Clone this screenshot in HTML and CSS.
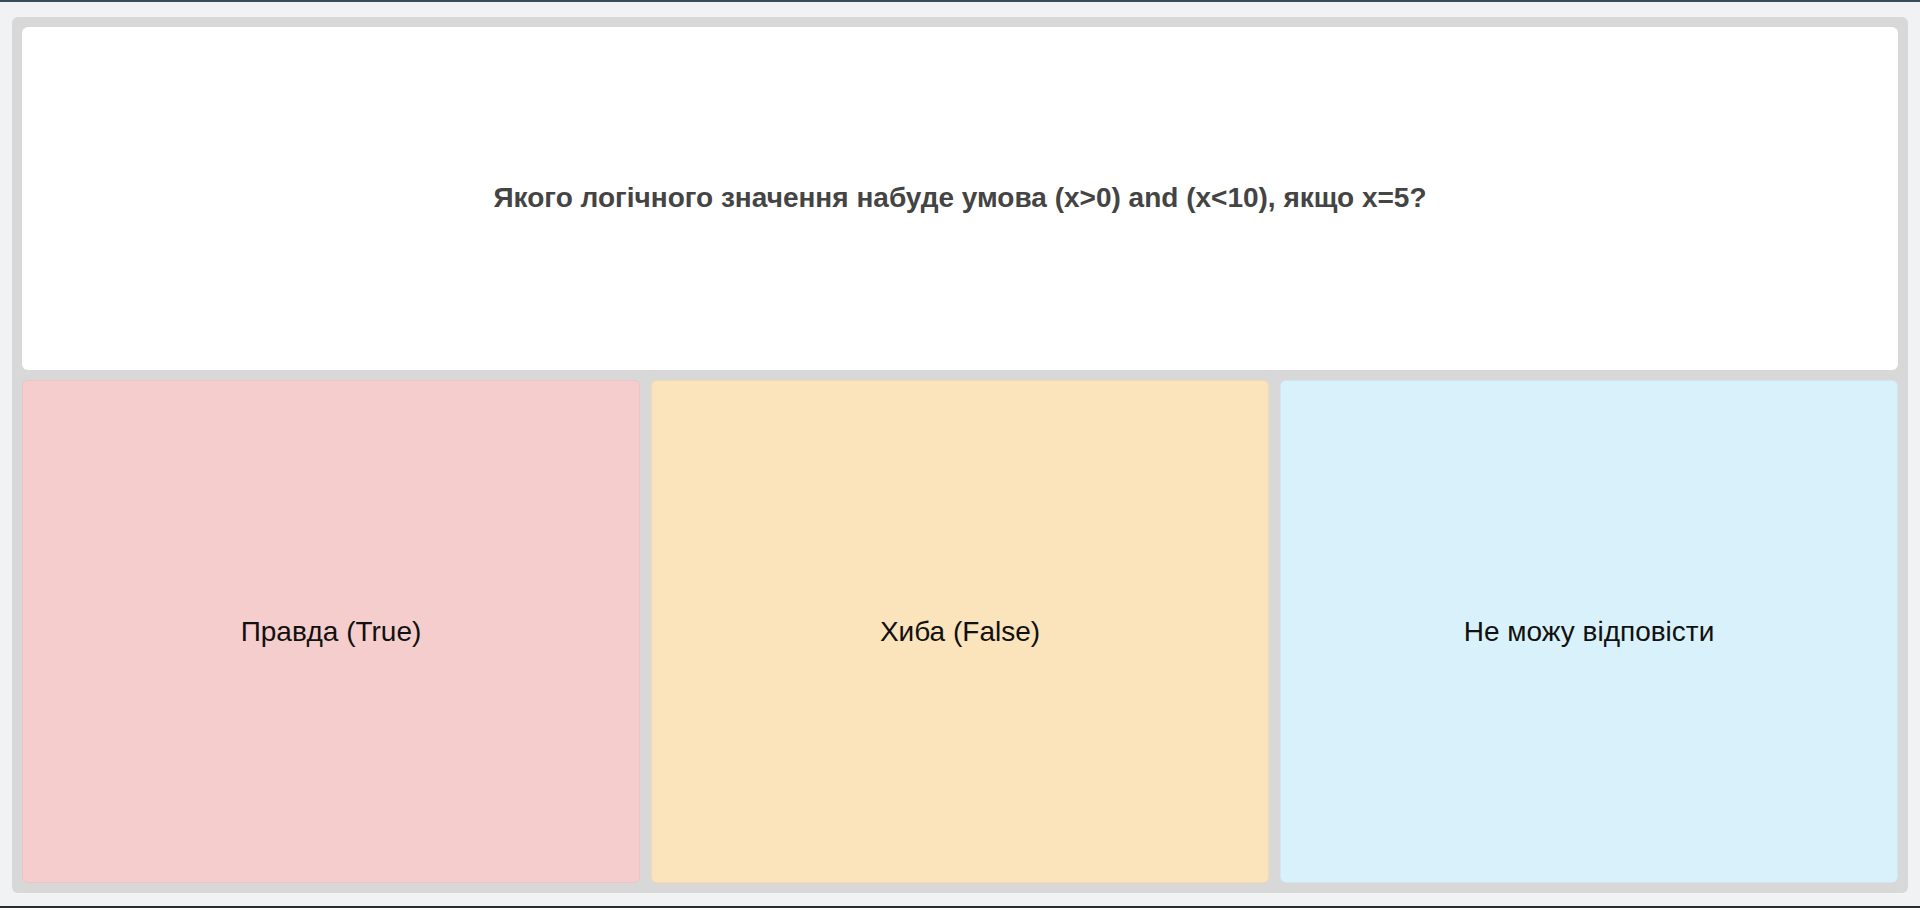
FILE: index.html
```html
<!DOCTYPE html>
<html lang="uk">
<head>
<meta charset="utf-8">
<title>Quiz</title>
<link rel="stylesheet" href="styles.css">
</head>
<body>
<div class="topbar"></div>
<main class="stage">
  <section class="board">
    <div class="question">
      <h1 class="question-text">Якого логічного значення набуде умова (x&gt;0) and (x&lt;10), якщо x=5?</h1>
    </div>
    <div class="answers">
      <button class="answer answer-red">Правда (True)</button>
      <button class="answer answer-orange">Хиба (False)</button>
      <button class="answer answer-blue">Не можу відповісти</button>
    </div>
  </section>
</main>
<div class="bottombar"></div>
</body>
</html>
```

FILE: styles.css
```css
html, body {
  margin: 0;
  padding: 0;
}
body {
  width: 1920px;
  height: 908px;
  background: #f1f2f3;
  font-family: "Liberation Sans", Arial, sans-serif;
  display: flex;
  flex-direction: column;
  overflow: hidden;
}
.topbar {
  height: 2px;
  background: #3a4b5a;
  flex: none;
}
.stage {
  flex: 1;
  padding: 15px 12px 13px 12px;
  display: flex;
  min-height: 0;
}
.board {
  flex: 1;
  background: #d8d8d8;
  border-radius: 6px;
  padding: 10px;
  display: flex;
  flex-direction: column;
  gap: 10px;
}
.question {
  height: 343px;
  flex: none;
  background: #ffffff;
  border-radius: 6px;
  display: flex;
  align-items: center;
  justify-content: center;
}
.question-text {
  margin: 0;
  margin-top: -2px;
  font-size: 28px;
  font-weight: bold;
  color: #444444;
}
.answers {
  flex: 1;
  display: grid;
  grid-template-columns: repeat(3, 1fr);
  gap: 11px;
}
.answer {
  border: 1px solid rgba(0,0,0,0.04);
  border-radius: 6px;
  font-family: "Liberation Sans", Arial, sans-serif;
  font-size: 28px;
  color: #111111;
  display: flex;
  align-items: center;
  justify-content: center;
  padding: 0;
  cursor: pointer;
}
.answer-red { background: #f5cdcd; }
.answer-orange { background: #fbe3bb; }
.answer-blue { background: #d9f1fa; }
.bottombar {
  height: 2px;
  background: #2c2c2c;
  flex: none;
}
```
